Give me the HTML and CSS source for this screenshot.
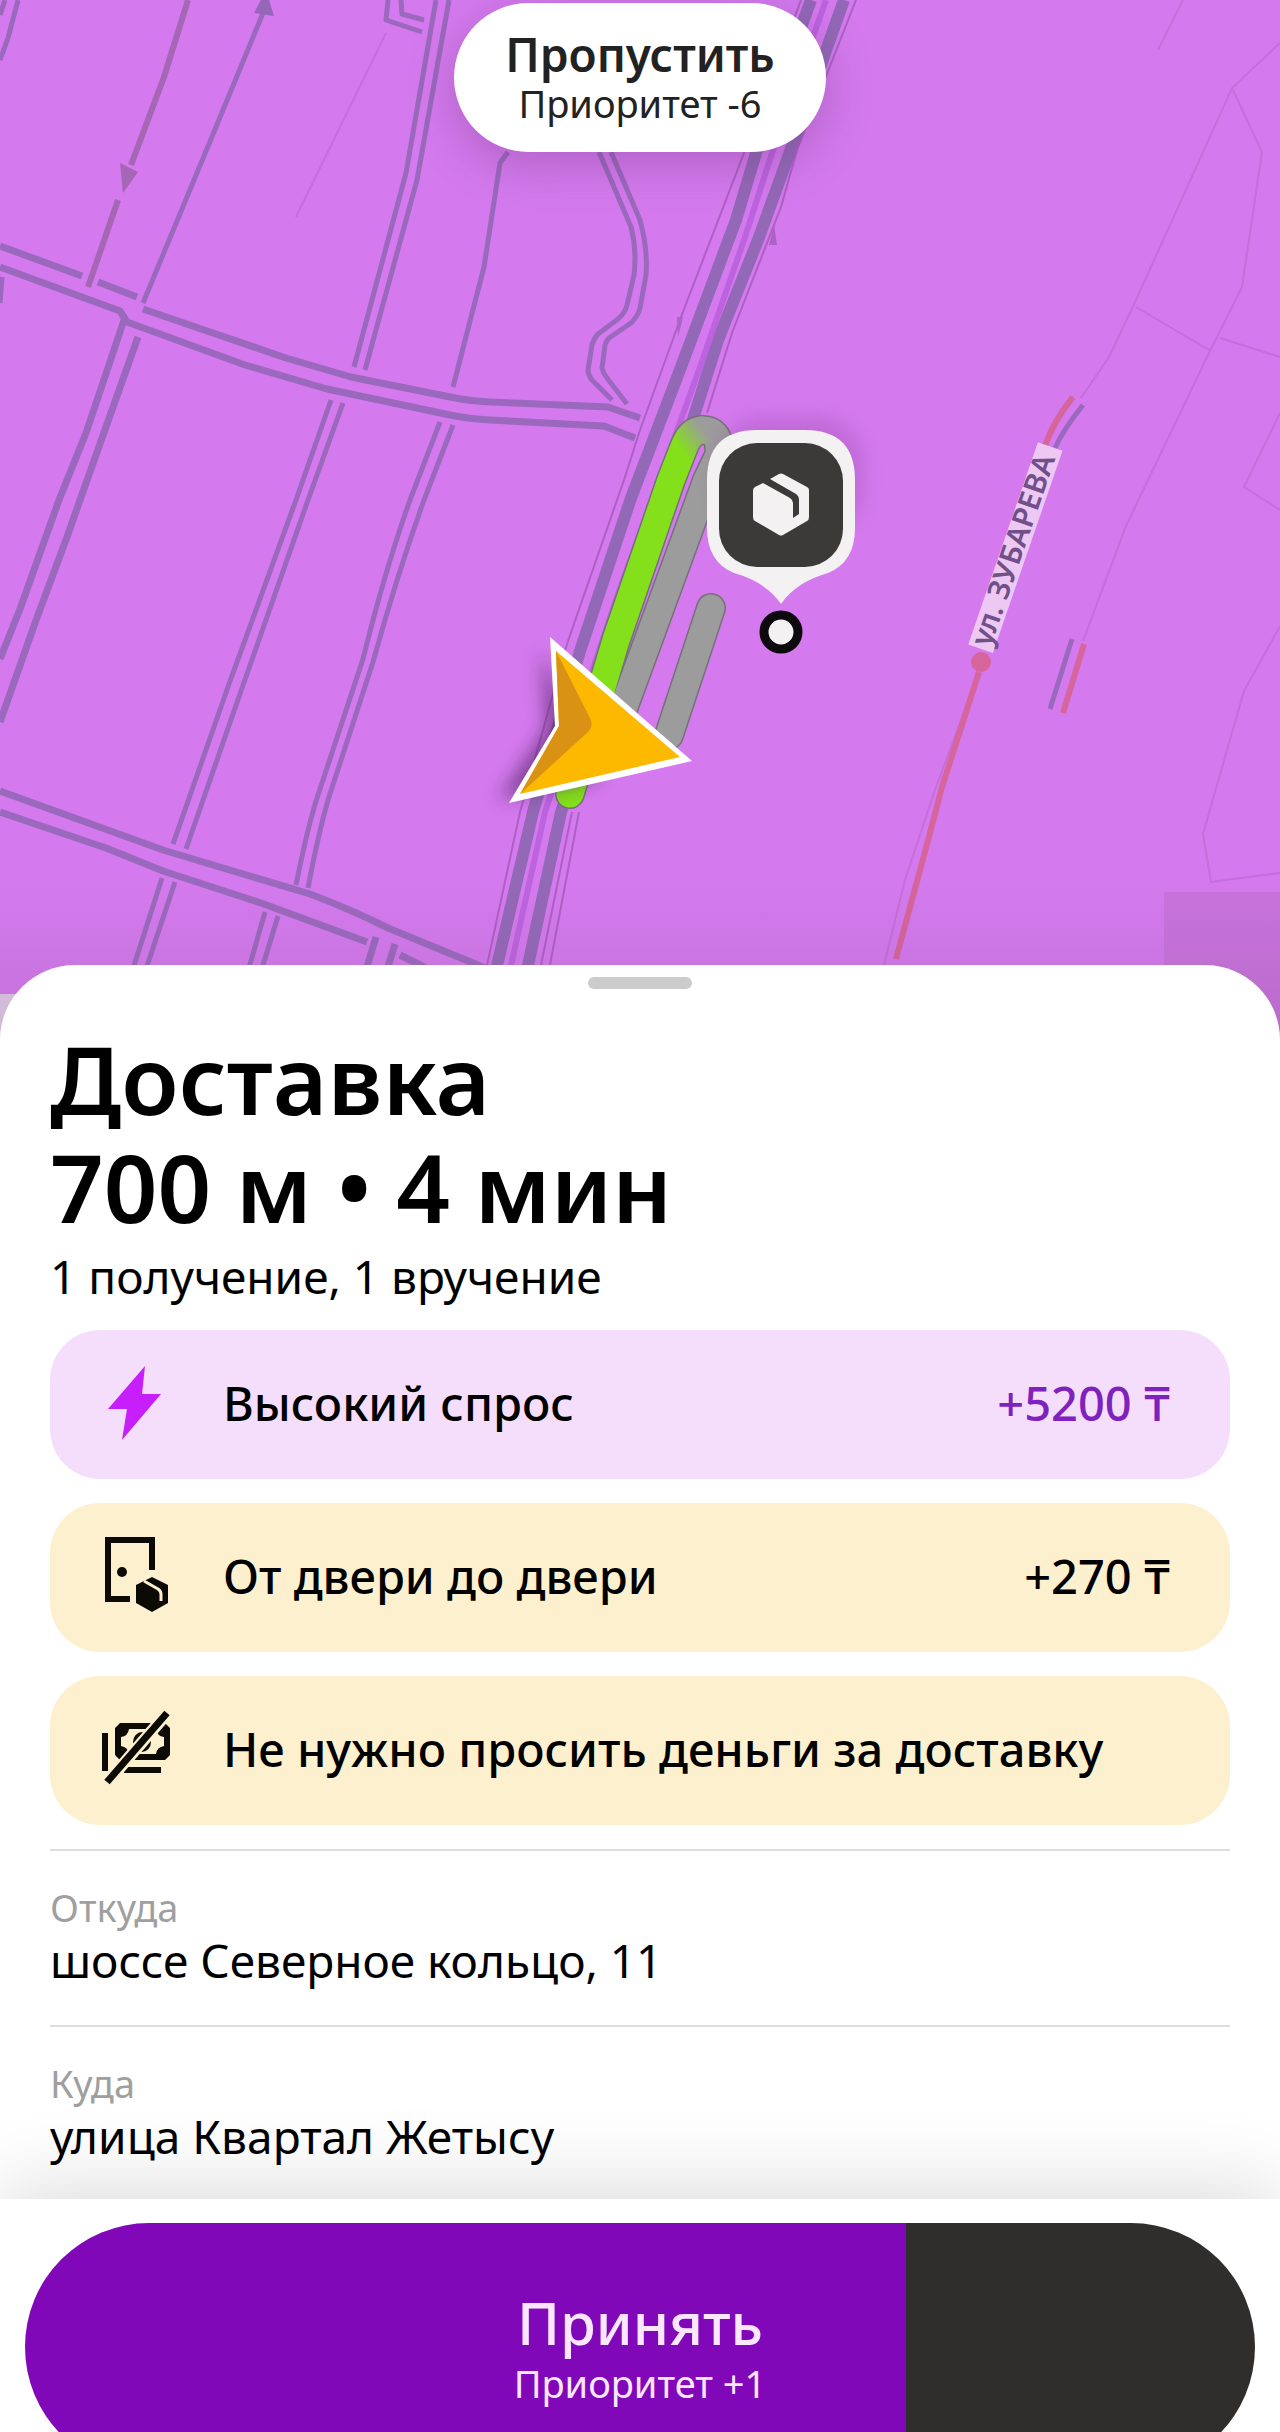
FILE: index.html
```html
<!DOCTYPE html>
<html lang="ru">
<head>
    <meta charset="UTF-8">
    <meta name="viewport" content="width=device-width, initial-scale=1.0">
    <title>Доставка</title>
    <link rel="stylesheet" href="styles.css">
</head>
<body>
    <div class="map">
        <svg class="map-canvas" viewBox="0 0 1280 1060" preserveAspectRatio="xMidYMin slice" aria-hidden="true">
            <defs>
                <linearGradient id="route-fade" gradientUnits="userSpaceOnUse" x1="680" y1="448" x2="704" y2="430">
                    <stop offset="0" stop-color="#84e01a"/>
                    <stop offset="1" stop-color="#9c9c9c"/>
                </linearGradient>
                <linearGradient id="sheet-shade" x1="0" y1="0" x2="0" y2="1">
                    <stop offset="0" stop-color="#7a4a80" stop-opacity="0"/>
                    <stop offset="1" stop-color="#7a4a80" stop-opacity="0.22"/>
                </linearGradient>
                <filter id="blur" x="-30%" y="-30%" width="160%" height="160%"><feGaussianBlur stdDeviation="9"/></filter>
            </defs>

            <!-- plots -->
            <rect x="1164" y="892" width="116" height="168" fill="#c873dc"/>
            <g class="plot">
                <path d="M386 33L296 217M1183 0L1158 50"/>
                <path d="M1280 43L1232 88L1136 300L1109 357L1081 398"/>
                <path d="M1232 88L1262 152L1242 287L1209 353L1148 480L1126 526L1083 641"/>
                <path d="M1136 307L1209 350M1220 338L1280 357M1280 413L1244 487L1280 510"/>
                <path d="M1280 626L1244 691L1203 834L1211 882L1280 873"/>
                <path d="M976 680L935 790L905 880L884 965"/>
            </g>

            <!-- small streets -->
            <g class="street">
                <path d="M5 0L0 15M18 0L8 38L0 60M2 277L0 303"/>
                <path d="M263 13L216 127L143 303"/>
                <path d="M388 0L386 20L422 32M401 0L402 14L424 20"/>
                <path d="M436 0L406 173L354 367M449 0L417 180L365 370"/>
                <path d="M508 152L500 163L484 267L453 387"/>
                <path d="M599 152L631 227Q637 250 634 275L627 305Q625 313 618 319L598 334Q594 338 592 345L588 370Q588 375 592 380L612 400"/>
                <path d="M611 152L640 220Q648 250 646 275L640 308Q638 316 631 323L609 338Q606 341 605 345L602 368Q603 373 607 378L627 404"/>
                <path d="M331 400L296 500L229 684L173 844M343 403L308 500L241 691L186 849"/>
                <path d="M162 878L131 975M175 882L144 975"/>
                <path d="M440 422L410 500Q385 570 363 659L318 795Q308 825 296 885M453 425L424 500Q397 575 373 662L328 800Q318 835 308 888"/>
                <path d="M265 912L247 975M278 916L260 975"/>
            </g>
            <path d="M254 13L274 16L266 -10Z" fill="#9667b8"/>

            <!-- avenues -->
            <g class="avenue">
                <path d="M0 246L82 276M98 282L137 297M143 309L286 358L351 377L450 397Q469 401 490 402L608 407L640 418"/>
                <path d="M0 267L120 311L127 322L245 365L327 389L450 415Q469 419 490 420L604 426L635 438"/>
                <path d="M124 320L86 433L59 500L20 609L0 659M138 337L80 500L67 537L35 623L0 722"/>
                <path d="M0 791L163 850L310 894Q350 909 388 928L490 970"/>
                <path d="M0 812L106 848L163 871L261 903L367 942"/>
                <path d="M376 937L366 970M395 944L387 970M400 955L430 970"/>
            </g>

            <!-- one-way street -->
            <path class="oneway" d="M188 0L164 77L131 165M118 200L88 287"/>
            <path d="M120 163L138 172L123 193Z" fill="#a566b6"/>

            <!-- highway -->
            <g class="highway">
                <path d="M811 0L756 153L736 220L681 367L631 498L580 651L533 812L496 970"/>
                <path d="M844 0L787 160L758 240L718 340L695 413L620 640L561 812L527 970"/>
            </g>
            <path class="median" d="M826 0L772 153L744 240L700 367L616 600L545 812L510 970"/>
            <path class="curb" d="M801 0L744 153L681 317L640 430L624 480L567 644L520 812L486 970M856 0L797 150L781 207L732 333L707 413M579 812L549 970M572 812L540 970"/>
            <path d="M774 224L777 245L769 245ZM677 317L683 317L678 337Z" fill="#a964c4"/>

            <!-- traffic -->
            <path class="traffic" d="M979 672L942 787L926 848L896 959M1084 644L1063 713M1073 397Q1054 420 1044 448"/>
            <path class="street" d="M1072 639L1050 709M1083 405Q1063 430 1055 448"/>
            <circle cx="981" cy="662" r="10" fill="#d5659a"/>

            <!-- street name -->
            <g transform="translate(990 652) rotate(-71)">
                <rect x="0" y="-23" width="214" height="26" fill="#ecc8f3"/>
                <text class="street-name" x="4" y="-1">ул. ЗУБАРЕВА</text>
            </g>
            <rect x="0" y="994" width="40" height="60" fill="#e2cfe9"/>

            <rect x="0" y="880" width="1280" height="180" fill="url(#sheet-shade)"/>

            <!-- route -->
            <path class="route-edge" d="M669 735L711 608"/>
            <path class="route-done" d="M669 735L711 608"/>
            <path class="route-edge" d="M622 712L707 480L719 455Q721 430 702 430"/>
            <path class="route-edge" d="M570 794L616 640L671 480L684 447Q690 431 702 430"/>
            <path class="route-done" d="M622 712L707 480L719 455Q721 430 702 430"/>
            <path class="route-active" d="M570 794L616 640L671 480L684 447Q690 431 702 430"/>

            <!-- courier -->
            <path d="M540 650L546 728L498 800L600 780Z" fill="#4b2060" opacity="0.6" filter="url(#blur)"/>
            <path d="M550 637L692 761L509 803L555 726Z" fill="#fff"/>
            <path d="M556 651L680 757L520 794L559 726Z" fill="#fdb900"/>
            <path d="M556 651L590 718Q594 726 588 732L520 794L559 726Z" fill="#d99213"/>

            <!-- pickup pin -->
            <rect x="715" y="415" width="150" height="120" rx="50" fill="#8a3f9a" opacity="0.25" filter="url(#blur)"/>
            <path d="M757 430H805Q855 430 855 480V528Q855 562 828 573Q796 582 781 604Q766 582 734 573Q707 562 707 528V480Q707 430 757 430Z" fill="#f3f1f2"/>
            <rect x="719" y="443" width="124" height="124" rx="38" fill="#3c3a38"/>
            <path d="M763 483L755 487Q753 488 753 491V517Q753 520 755 521L779 535Q781 536 783 535L807 521Q809 520 809 517V490Q809 488 807 487L783 474Q781 473 779 474L770 479L796 494Q799 496 799 500V514L793 518V503Q793 500 790 498Z" fill="#f3f1f2"/>
            <circle cx="781" cy="632" r="17" fill="#f3f1f2" stroke="#0c0a0c" stroke-width="9"/>
        </svg>
        <button class="skip-btn">
            <span class="skip-title">Пропустить</span>
            <span class="skip-note">Приоритет -6</span>
        </button>
    </div>

    <main class="sheet">
        <div class="handle"></div>
        <h1>Доставка<br>700 м • 4 мин</h1>
        <p class="summary">1 получение, 1 вручение</p>

        <ul class="options">
            <li class="option demand">
                <svg class="option-icon" viewBox="0 0 72 80" aria-hidden="true">
                    <path d="M43 3L6 46H25L20 77L59 31H40Z" fill="#c61ffb"/>
                </svg>
                <span class="option-name">Высокий спрос</span>
                <span class="option-price">+5200 ₸</span>
            </li>
            <li class="option">
                <svg class="option-icon" viewBox="0 0 72 80" aria-hidden="true">
                    <path d="M28 63H6V4H50V34" fill="none" stroke="#0c0a04" stroke-width="6"/>
                    <circle cx="20" cy="36" r="5" fill="#0c0a04"/>
                    <path d="M50 41L66 49V67L50 76L34 67V49Z" fill="#0c0a04"/>
                    <path d="M42 45L56 53Q59 55 59 58V65" fill="none" stroke="#fdf0ce" stroke-width="3"/>
                </svg>
                <span class="option-name">От двери до двери</span>
                <span class="option-price">+270 ₸</span>
            </li>
            <li class="option">
                <svg class="option-icon" viewBox="0 0 72 80" aria-hidden="true">
                    <path d="M3 24V62M22 61H59" fill="none" stroke="#0c0a04" stroke-width="6"/>
                    <path fill-rule="evenodd" d="M18 14H63L68 19V46L63 51H18L13 46V19ZM27 20Q26 27 19 28V37Q26 38 27 45H54Q55 38 62 37V28Q55 27 54 20Z" fill="#0c0a04"/>
                    <ellipse cx="40" cy="33" rx="9" ry="10" fill="#0c0a04"/>
                    <path d="M2 77L68 1" stroke="#fdf0ce" stroke-width="12"/>
                    <path d="M5 73L65 4" stroke="#0c0a04" stroke-width="7"/>
                </svg>
                <span class="option-name">Не нужно просить деньги за доставку</span>
            </li>
        </ul>

        <dl class="route">
            <div class="point">
                <dt>Откуда</dt>
                <dd>шоссе Северное кольцо, 11</dd>
            </div>
            <div class="point">
                <dt>Куда</dt>
                <dd>улица Квартал Жетысу</dd>
            </div>
        </dl>
    </main>

    <footer class="footer">
        <button class="accept-btn">
            <span class="accept-title">Принять</span>
            <span class="accept-note">Приоритет +1</span>
        </button>
    </footer>
</body>
</html>
```
FILE: styles.css
```css
* {
    box-sizing: border-box;
}
body {
    font-family: "Noto Sans", "Open Sans", sans-serif;
    background-color: #fff;
    color: #000;
    margin: 0;
    height: 100vh;
    overflow: hidden;
}
h1, p, ul, dl, dd {
    margin: 0;
    padding: 0;
}
button {
    font-family: inherit;
    border: none;
    padding: 0;
    cursor: pointer;
    display: flex;
    flex-direction: column;
    align-items: center;
}

/* map */
.map {
    height: 1060px;
    background-color: #d47aee;
    position: relative;
    overflow: hidden;
}
.map-canvas {
    width: 100%;
    height: 100%;
    display: block;
}
.plot {
    fill: none;
    stroke: #c66edb;
    stroke-width: 2;
}
.street {
    fill: none;
    stroke: #9a69bd;
    stroke-width: 5;
    stroke-linejoin: round;
}
.avenue {
    fill: none;
    stroke: #9a69bd;
    stroke-width: 7;
    stroke-linejoin: round;
}
.oneway {
    fill: none;
    stroke: #a566b6;
    stroke-width: 6;
}
.highway {
    fill: none;
    stroke: #9368b7;
    stroke-width: 12;
}
.median {
    fill: none;
    stroke: #bd63e0;
    stroke-width: 6;
}
.curb {
    fill: none;
    stroke: #ae5fc4;
    stroke-width: 2;
}
.traffic {
    fill: none;
    stroke: #d5659a;
    stroke-width: 6;
}
.street-name {
    font-size: 30px;
    font-weight: 600;
    fill: #71508a;
}
.route-edge,
.route-done,
.route-active {
    fill: none;
    stroke-linecap: round;
    stroke-linejoin: round;
}
.route-edge {
    stroke: #75707a;
    stroke-width: 30;
}
.route-done {
    stroke: #9c9c9c;
    stroke-width: 27;
}
.route-active {
    stroke: url(#route-fade);
    stroke-width: 27;
}
.skip-btn {
    position: absolute;
    top: 3px;
    left: 50%;
    transform: translateX(-50%);
    width: 372px;
    height: 149px;
    padding-top: 22px;
    border-radius: 75px;
    background-color: #fff;
    color: #222;
    box-shadow: 0 12px 48px rgba(90, 40, 100, 0.3);
}
.skip-title {
    font-size: 46px;
    font-weight: 600;
    line-height: 58px;
}
.skip-note {
    font-size: 38px;
    line-height: 40px;
}

/* order sheet */
.sheet {
    position: relative;
    margin-top: -95px;
    padding: 12px 50px 0;
    border-radius: 75px 75px 0 0;
    background-color: #fff;
}
.handle {
    width: 104px;
    height: 12px;
    margin: 0 auto;
    border-radius: 6px;
    background-color: #ccc;
}
h1 {
    margin-top: 36px;
    font-size: 94px;
    font-weight: 600;
    line-height: 108px;
}
.summary {
    font-size: 46px;
    line-height: 70px;
}
.options {
    margin-top: 19px;
    display: flex;
    flex-direction: column;
    gap: 24px;
    list-style: none;
}
.option {
    display: flex;
    align-items: center;
    min-height: 149px;
    padding: 0 60px 4px 52px;
    border-radius: 50px;
    background-color: #fdf0ce;
    font-size: 47px;
    font-weight: 500;
    line-height: 64px;
}
.demand {
    background-color: #f5defb;
}
.option-icon {
    width: 72px;
    height: 80px;
    margin-right: 49px;
}
.option-name {
    flex: 1;
}
.demand .option-price {
    color: #7f22bd;
}
.route {
    margin-top: 24px;
}
.point {
    padding: 30px 0 38px;
    border-top: 2px solid #dedede;
}
.point:last-child {
    padding-bottom: 36px;
}
dt {
    font-size: 38px;
    line-height: 52px;
    color: #9f9f9f;
}
dd {
    font-size: 46px;
    line-height: 54px;
}

/* accept */
.footer {
    position: relative;
    padding: 24px 25px;
    background-color: #fff;
    box-shadow: 0 -8px 80px rgba(0, 0, 0, 0.15);
}
.accept-btn {
    width: 100%;
    height: 248px;
    padding-top: 60px;
    border-radius: 124px;
    background: linear-gradient(to right, #8008b8 71.6%, #302e2d 71.6%);
    color: #fbe6ff;
}
.accept-title {
    font-size: 58px;
    font-weight: 500;
    line-height: 80px;
}
.accept-note {
    font-size: 38px;
    line-height: 40px;
}
```
